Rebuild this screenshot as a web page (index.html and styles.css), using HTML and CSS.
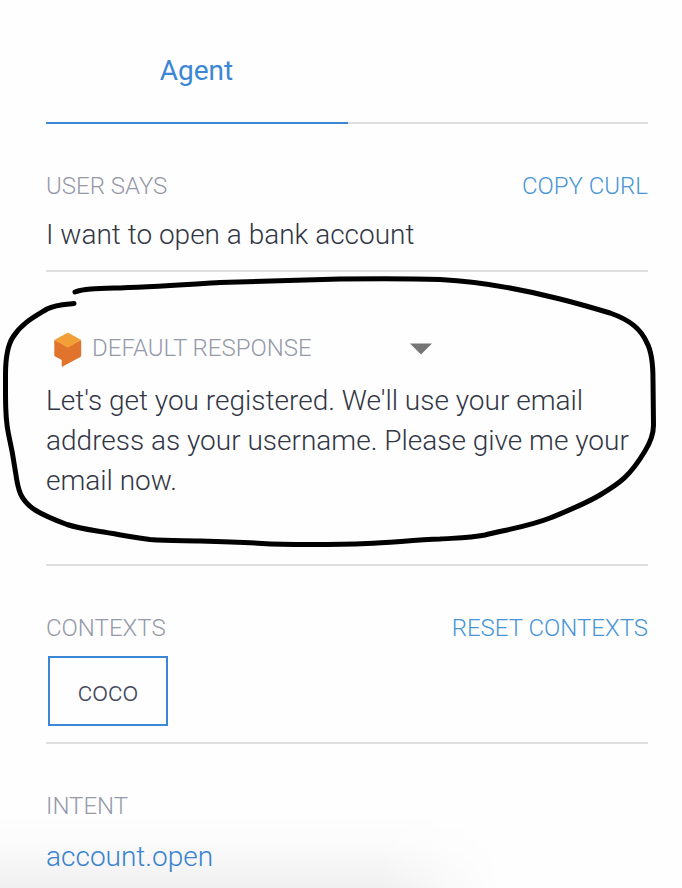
FILE: index.html
```html
<!DOCTYPE html>
<html lang="en">
<head>
<meta charset="utf-8">
<title>Agent</title>
<link rel="stylesheet" href="styles.css">
</head>
<body>
<main class="panel">
  <nav class="tabs"><a class="tab active">Agent</a></nav>
  <section class="section says">
    <div class="head"><span class="label">USER SAYS</span><a class="action curl">COPY CURL</a></div>
    <p class="text">I want to open a bank account</p>
  </section>
  <section class="section response">
    <div class="head source">
      <svg class="logo" width="28" height="36" viewBox="0 0 28 36">
        <path fill="#e0742d" d="M.3 8 13.800 14 27.200 8V23.500q0 1-.8 1.500L8.700 34.600Q7.700 35 7.700 34V28L1.200 24.500Q.3 24 .3 23Z"/>
        <path fill="#f29f37" d="M.3 8 13 1q.8-.4 1.600 0L27.200 8 13.800 15.700Z"/>
      </svg>
      <span class="label">DEFAULT RESPONSE</span>
      <svg class="caret" width="22" height="12" viewBox="0 0 22 12"><path fill="#757575" d="M0 .5h22L11 11.500Z"/></svg>
    </div>
    <p class="text">Let's get you registered. We'll use your email address as your username. Please give me your email now.</p>
  </section>
  <section class="section contexts">
    <div class="head"><span class="label">CONTEXTS</span><a class="action reset">RESET CONTEXTS</a></div>
    <span class="chip">coco</span>
  </section>
  <section class="section intent">
    <div class="head"><span class="label">INTENT</span></div>
    <a class="text link">account.open</a>
  </section>
</main>
<div class="shade"></div>
<svg class="ink" width="682" height="888" viewBox="0 0 682 888">
  <path d="M75 292C84 288.500 98 288.500 120 288C155 287 190 284.500 220 282.500C260 281 300 280 340 279C380 278.500 410 278.500 440 279.500C485 282 525 290 560 299C580 304 595 308.500 610 313C630 320 641 329 647 343C652 352 653 366 653 380L653.500 425C653.500 435 650 443 645 451C630 476 620 483 600 495C583 505 567 511 550 518C530 526 510 529 485 535C470 538 455 538 440 539C415 540 390 542.500 367 543.500C345 544.500 328 544.500 310 544.500C293 544.500 278 544.500 262 543.500C240 542 222 541.500 200 541C183 540.500 168 541 150 539.500C133 537.500 117 534 100 531.500C88 529.500 78 528 67 524.500C55 520 45 516 35 510C20 500 18 490 15.500 472C13 455 11 445 8.500 434C5.500 420 5.500 410 5.500 395V375C5.500 358 7 346 13 337C22 323 34 317 47 309C56 304.500 64 304.500 74 303.500"/>
</svg>
</body>
</html>
```
FILE: styles.css
```css
* { box-sizing: border-box; }
body {
  margin: 0;
  height: 888px;
  overflow: hidden;
  background: #fefefe;
  font-family: Roboto, "Liberation Sans", sans-serif;
  font-weight: 300;
  position: relative;
}
.panel { width: 602px; margin-left: 46px; }
.tabs {
  display: flex;
  height: 124px;
  box-shadow: inset 0 -2px #dedede;
}
.tab {
  width: 302px;
  padding: 51px 1px 0 0;
  border-bottom: 2px solid #3b87d6;
  color: #3b87d6;
  font-size: 28px;
  line-height: 40px;
  font-weight: 400;
  text-align: center;
}
.section { border-bottom: 2px solid #dedede; padding-top: 48px; }
.says { height: 148px; }
.response { height: 294px; padding-top: 60px; }
.contexts { height: 178px; }
.intent { border: 0; height: 144px; }
.head {
  display: flex;
  justify-content: space-between;
  height: 28px;
  font-size: 24px;
  line-height: 28px;
  white-space: nowrap;
}
.label { color: #9599a8; }
.action { color: #4895d6; }
.text {
  display: block;
  margin: 15px 0 0;
  color: #323645;
  font-size: 28px;
  line-height: 40px;
}
.intent .text { margin-top: 17px; color: #3b87d6; }
.source { justify-content: flex-start; height: 36px; padding-left: 8px; }
.source .label { margin: 2px 98px 0 10px; }
.caret { margin-top: 11px; }
.response .text { margin-top: 13px; }
.chip {
  display: flex;
  align-items: center;
  justify-content: center;
  width: 120px;
  height: 70px;
  margin: 14px 0 0 2px;
  border: 2px solid #3b87d6;
  color: #454a60;
  font-size: 28px;
}
.shade {
  position: absolute;
  left: 0;
  bottom: 0;
  width: 500px;
  height: 74px;
  background: linear-gradient(rgba(0, 0, 0, 0), rgba(0, 0, 0, .012) 40%, rgba(0, 0, 0, .055));
  -webkit-mask-image: linear-gradient(to right, #000 76%, rgba(0, 0, 0, .35) 90%, transparent);
  mask-image: linear-gradient(to right, #000 76%, rgba(0, 0, 0, .35) 90%, transparent);
}
.ink { position: absolute; left: 0; top: 0; pointer-events: none; }
.ink path {
  fill: none;
  stroke: #000;
  stroke-width: 5;
  stroke-linecap: round;
  stroke-linejoin: round;
}
```
